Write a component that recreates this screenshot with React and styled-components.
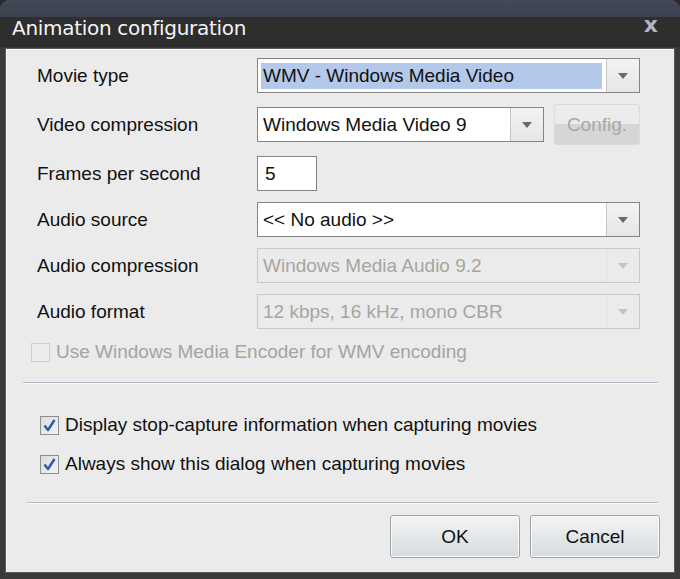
import React from 'react';
import styled, { createGlobalStyle } from 'styled-components';

const GlobalStyle = createGlobalStyle`
  html, body {
    margin: 0;
    padding: 0;
    background: #2b2b2b;
  }
  body {
    font-family: 'Liberation Sans', Arial, sans-serif;
  }
`;

function Arrow({ disabled }) {
  return (
    <svg width="10" height="6" viewBox="0 0 10 6">
      <path d="M0 0 L10 0 L5 6 Z" fill={disabled ? '#c4c4c4' : '#6a6a6a'} />
    </svg>
  );
}

function CheckMark({ checked }) {
  if (!checked) return null;
  return (
    <svg width="15" height="15" viewBox="0 0 15 15">
      <path d="M2.5 7.5 L6 12 L12.5 2" fill="none" stroke="#2d5aa8" strokeWidth="2.4" strokeLinejoin="round" />
    </svg>
  );
}

function Select({ value, disabled, selected }) {
  return (
    <SelectBox disabled={disabled}>
      <SelectText disabled={disabled}>
        <ValueText selected={selected}>{value}</ValueText>
      </SelectText>
      <ArrowButton disabled={disabled}>
        <Arrow disabled={disabled} />
      </ArrowButton>
    </SelectBox>
  );
}

function CheckRow({ label, checked, disabled, indent, top }) {
  return (
    <CheckLine indent={indent} top={top}>
      <Box disabled={disabled}>
        <CheckMark checked={checked} />
      </Box>
      <CheckLabel disabled={disabled}>{label}</CheckLabel>
    </CheckLine>
  );
}

export default function App() {
  return (
    <>
      <GlobalStyle />
      <Window>
        <TitleBar>
          <TitleText>Animation configuration</TitleText>
          <CloseX>x</CloseX>
        </TitleBar>
        <Body>
          <Form>
            <Label>Movie type</Label>
            <Select value="WMV - Windows Media Video" selected />

            <Label>Video compression</Label>
            <ControlRow>
              <Select value="Windows Media Video 9" />
              <ConfigButton>Config.</ConfigButton>
            </ControlRow>

            <Label>Frames per second</Label>
            <div>
              <NumberBox>5</NumberBox>
            </div>

            <Label>Audio source</Label>
            <Select value="<< No audio >>" />

            <Label>Audio compression</Label>
            <Select value="Windows Media Audio 9.2" disabled />

            <Label>Audio format</Label>
            <Select value="12 kbps, 16 kHz, mono CBR" disabled />
          </Form>

          <CheckRow label="Use Windows Media Encoder for WMV encoding" disabled indent={25} top={12} />
          <Separator left={17} top={19} />

          <CheckRow label="Display stop-capture information when capturing movies" checked indent={34} top={30} />
          <CheckRow label="Always show this dialog when capturing movies" checked indent={34} top={17} />
          <Separator left={21} top={27} />

          <Buttons>
            <PushButton>OK</PushButton>
            <PushButton>Cancel</PushButton>
          </Buttons>
        </Body>
      </Window>
    </>
  );
}

const Window = styled.div`
  width: 680px;
  height: 579px;
  display: flex;
  flex-direction: column;
  background: #3a3a3a;
  border-radius: 9px 9px 0 0;
  overflow: hidden;
  box-sizing: border-box;
`;

const TitleBar = styled.div`
  height: 47px;
  flex-shrink: 0;
  display: flex;
  align-items: flex-end;
  justify-content: space-between;
  padding: 0 22px 7px 12px;
  box-sizing: border-box;
  background: linear-gradient(#444959 0, #3c4150 17px, #2f2f2f 17px, #2c2c2c 100%);
`;

const TitleText = styled.div`
  color: #f4f4f4;
  font-family: 'DejaVu Sans', 'Liberation Sans', sans-serif;
  font-size: 20px;
  letter-spacing: -0.3px;
  line-height: 24px;
`;

const CloseX = styled.div`
  color: #aeb4c0;
  font-family: 'DejaVu Sans', sans-serif;
  font-weight: bold;
  font-size: 22px;
  line-height: 24px;
  margin-bottom: 3px;
`;

const Body = styled.div`
  flex: 1;
  margin: 1px 5px 6px 5px;
  background: #ebebeb;
  border: 1px solid #5a5a5a;
  box-shadow: inset 1px 1px 0 #f8f8f8;
  display: flex;
  flex-direction: column;
  padding: 9px 0 0 0;
  box-sizing: border-box;
`;

const Form = styled.div`
  display: grid;
  grid-template-columns: 220px 383px;
  grid-template-rows: 35px 41px 35px 35px 35px 35px;
  row-gap: 11px;
  padding-left: 31px;
  align-items: center;
`;

const Label = styled.div`
  font-size: 19px;
  color: #111;
`;

const ControlRow = styled.div`
  display: flex;
  align-items: center;
  gap: 10px;
  height: 41px;

  & > :first-child {
    width: 287px;
  }
`;

const SelectBox = styled.div`
  display: flex;
  height: 35px;
  box-sizing: border-box;
  border: 1px solid ${(p) => (p.disabled ? '#c9c9c6' : '#858585')};
  background: ${(p) => (p.disabled ? '#ebebeb' : '#ffffff')};
`;

const SelectText = styled.div`
  flex: 1;
  display: flex;
  align-items: center;
  padding: 0 4px 0 3px;
  font-size: 19px;
  color: ${(p) => (p.disabled ? '#a6a6a0' : '#111')};
  min-width: 0;
`;

const ValueText = styled.div`
  flex: 1;
  height: 26px;
  line-height: 26px;
  padding-left: 2px;
  background: ${(p) => (p.selected ? '#b4c9e9' : 'transparent')};
  white-space: nowrap;
  overflow: hidden;
`;

const ArrowButton = styled.div`
  width: 32px;
  flex-shrink: 0;
  display: flex;
  align-items: center;
  justify-content: center;
  border-left: 1px solid ${(p) => (p.disabled ? '#e0e0de' : '#c6c6c6')};
  background: ${(p) =>
    p.disabled ? '#ebebeb' : 'linear-gradient(#f3f3f3, #e6e6e6)'};
`;

const ConfigButton = styled.div`
  width: 86px;
  height: 41px;
  box-sizing: border-box;
  border: 1px solid #dadada;
  border-radius: 3px;
  background: linear-gradient(#ededed 0, #ebebeb 48%, #d6d6d6 48%, #d6d6d6 100%);
  color: #a8a8a0;
  font-size: 19px;
  display: flex;
  align-items: center;
  justify-content: center;
`;

const NumberBox = styled.div`
  width: 60px;
  height: 35px;
  box-sizing: border-box;
  border: 1px solid #858585;
  background: #fff;
  font-size: 19px;
  color: #111;
  line-height: 33px;
  padding-left: 7px;
`;

const CheckLine = styled.div`
  display: flex;
  align-items: center;
  gap: 6px;
  height: 22px;
  margin-top: ${(p) => p.top}px;
  padding-left: ${(p) => p.indent}px;
`;

const Box = styled.div`
  width: 19px;
  height: 19px;
  box-sizing: border-box;
  border: 1px solid ${(p) => (p.disabled ? '#cfcfcf' : '#8e8e8e')};
  background: ${(p) =>
    p.disabled ? '#ececec' : 'linear-gradient(135deg, #dcdcdc, #f4f4f4)'};
  display: flex;
  align-items: center;
  justify-content: center;
`;

const CheckLabel = styled.div`
  font-size: 19px;
  color: ${(p) => (p.disabled ? '#a4a4a0' : '#111')};
  white-space: nowrap;
`;

const Separator = styled.div`
  margin: ${(p) => p.top}px 16px 0 ${(p) => p.left}px;
  height: 1px;
  background: #b4b9c6;
  border-bottom: 1px solid #fafafa;
`;

const Buttons = styled.div`
  display: flex;
  justify-content: flex-end;
  gap: 10px;
  padding: 11px 14px 0 0;
`;

const PushButton = styled.div`
  width: 130px;
  height: 43px;
  box-sizing: border-box;
  border: 1px solid #9ea3a7;
  border-radius: 3px;
  background: linear-gradient(#f4f5f5, #e4e7e8 50%, #d8dcde);
  box-shadow: inset 0 0 0 1px #fbfbfb;
  font-size: 19px;
  color: #111;
  display: flex;
  align-items: center;
  justify-content: center;
`;
